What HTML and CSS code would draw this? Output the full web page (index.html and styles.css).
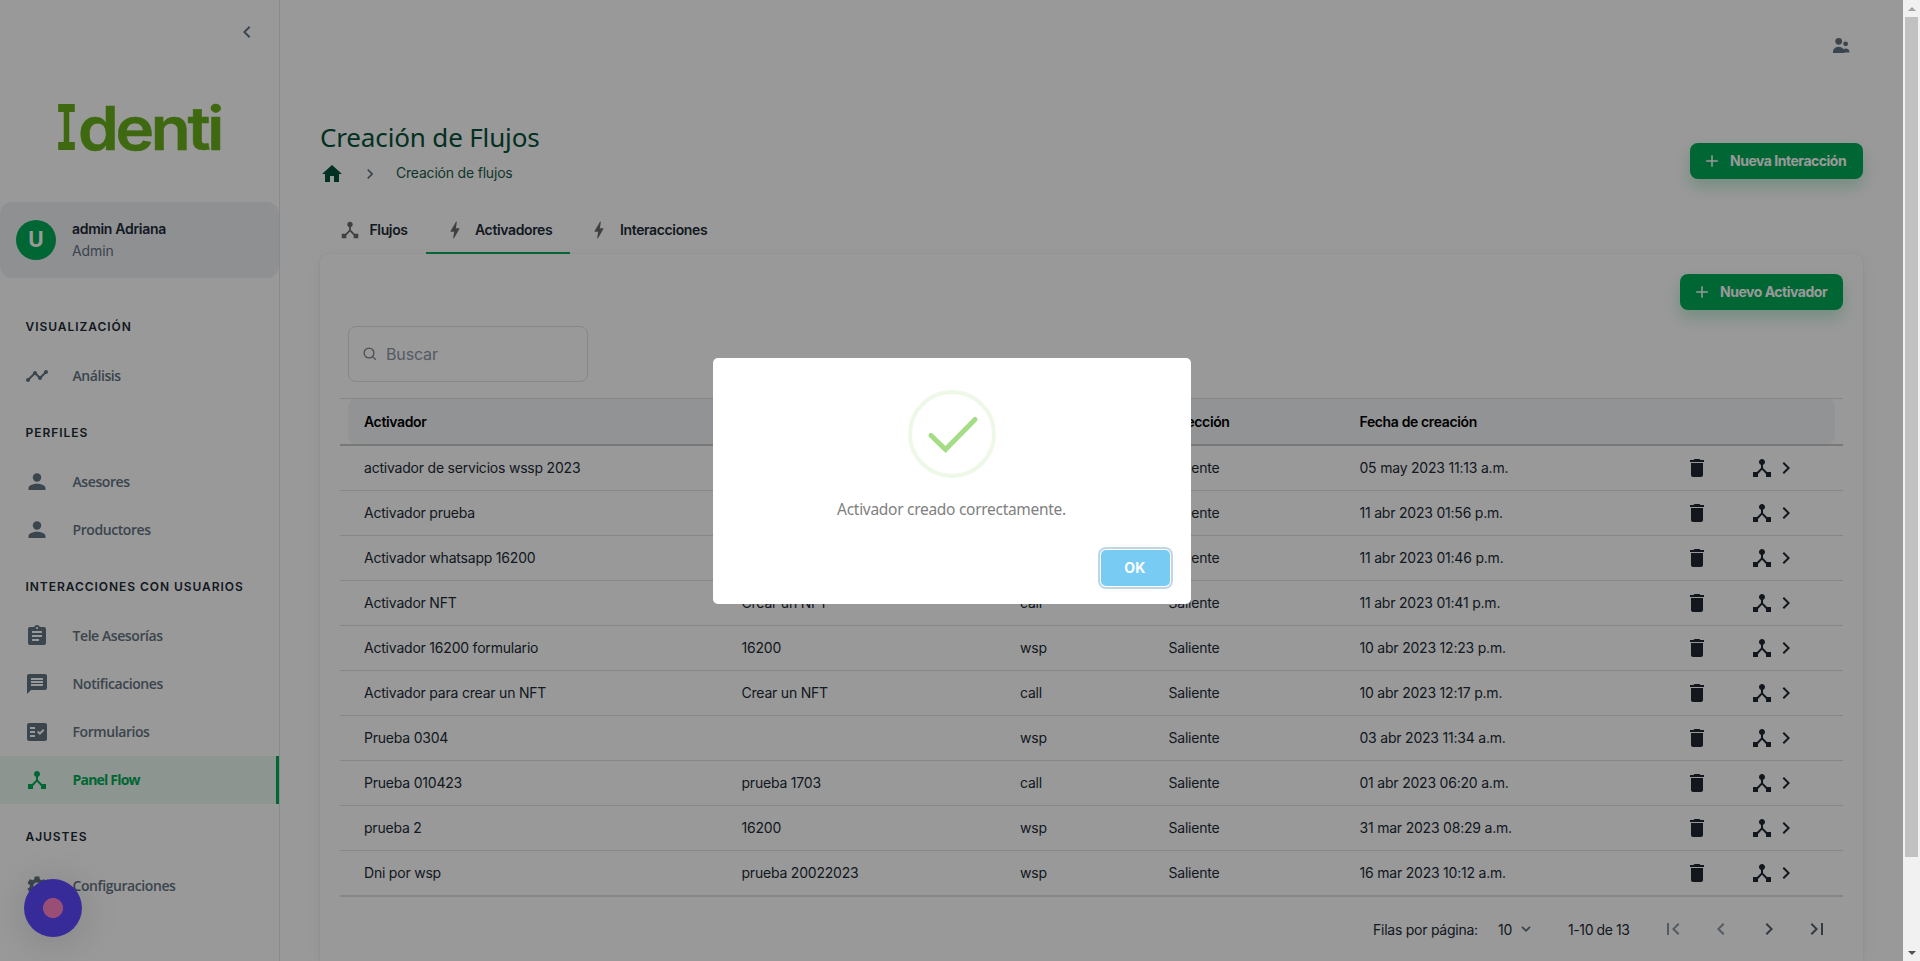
FILE: index.html
```html
<!DOCTYPE html>
<html lang="es">
<head>
<meta charset="utf-8">
<title>Creación de Flujos</title>
<link rel="stylesheet" href="styles.css">
</head>
<body>
<svg class="defs" width="0" height="0">
  <symbol id="hub" viewBox="0 0 24 24"><path d="M17 16l-4-4V8.820C14.160 8.400 15 7.300 15 6c0-1.660-1.340-3-3-3S9 4.340 9 6c0 1.300.84 2.400 2 2.820V12l-4 4H3v5h5v-3.050l4-4.200 4 4.200V21h5v-5h-4z"/></symbol>
  <symbol id="bolt" viewBox="0 0 24 24"><path d="M11 21h-1l1-7H7.500c-.88 0-.33-.75-.31-.78C8.480 10.940 10.420 7.540 13.010 3h1l-1 7h3.510c.4 0 .62.19.4.66C12.970 17.550 11 21 11 21z"/></symbol>
  <symbol id="person" viewBox="0 0 24 24"><circle cx="12" cy="7.500" r="4.200"/><path d="M3.500 20v-1.600c0-3 4.500-4.600 8.500-4.600s8.500 1.600 8.500 4.600V20z"/></symbol>
  <symbol id="right" viewBox="0 0 24 24"><path d="M8.600 16.600 13.200 12 8.600 7.400 10 6l6 6-6 6z"/></symbol>
  <symbol id="left" viewBox="0 0 24 24"><path d="M15.400 16.600 10.800 12l4.600-4.600L14 6l-6 6 6 6z"/></symbol>
  <symbol id="plus" viewBox="0 0 24 24"><path d="M19 12.900h-6.100V19h-1.800v-6.100H5v-1.800h6.100V5h1.800v6.100H19z"/></symbol>
  <symbol id="trash" viewBox="0 0 24 24"><path d="M6 19c0 1.100.9 2 2 2h8c1.100 0 2-.9 2-2V7H6zM19 4h-3.500l-1-1h-5l-1 1H5v2h14z"/></symbol>
</svg>
<div class="screen">
  <div class="app">
    <aside class="sidebar">
      <div class="collapse"><svg class="i24"><use href="#left"/></svg></div>
      <svg class="logo" width="164" height="56" viewBox="0 0 164 56">
        <text class="logo-i" x="-2" y="50" textLength="23" lengthAdjust="spacingAndGlyphs">I</text>
        <text class="logo-rest" x="21" y="50" textLength="143" lengthAdjust="spacingAndGlyphs">denti</text>
      </svg>
      <div class="user">
        <div class="avatar">U</div>
        <div><div class="user-name">admin Adriana</div><div class="user-role">Admin</div></div>
      </div>
      <nav>
        <h3 class="group">Visualización</h3>
        <a class="item"><svg class="i24" viewBox="0 0 24 24"><path d="M23 8c0 1.100-.9 2-2 2-.18 0-.35-.02-.51-.07l-3.560 3.550c.05.16.07.34.07.52 0 1.100-.9 2-2 2s-2-.9-2-2c0-.18.02-.36.07-.52l-2.550-2.550c-.16.05-.34.07-.52.07s-.36-.02-.52-.07l-4.550 4.560c.05.16.07.33.07.51 0 1.100-.9 2-2 2s-2-.9-2-2 .9-2 2-2c.18 0 .35.02.51.07l4.560-4.550C8.020 9.360 8 9.180 8 9c0-1.100.9-2 2-2s2 .9 2 2c0 .18-.02.36-.07.52l2.550 2.550c.16-.05.34-.07.52-.07s.36.02.52.07l3.550-3.560C19.020 8.350 19 8.180 19 8c0-1.100.9-2 2-2s2 .9 2 2z"/></svg><span>Análisis</span></a>
        <h3 class="group">Perfiles</h3>
        <a class="item"><svg class="i24"><use href="#person"/></svg><span>Asesores</span></a>
        <a class="item"><svg class="i24"><use href="#person"/></svg><span>Productores</span></a>
        <h3 class="group">Interacciones con usuarios</h3>
        <a class="item"><svg class="i24" viewBox="0 0 24 24"><path d="M19 3h-4.200C14.400 1.840 13.300 1 12 1s-2.400.84-2.820 2H5c-1.100 0-2 .9-2 2v14c0 1.100.9 2 2 2h14c1.100 0 2-.9 2-2V5c0-1.100-.9-2-2-2zm-7 0c.55 0 1 .45 1 1s-.45 1-1 1-1-.45-1-1 .45-1 1-1zm2 14H7v-2h7zm3-4H7v-2h10zm0-4H7V7h10z"/></svg><span>Tele Asesorías</span></a>
        <a class="item"><svg class="i24" viewBox="0 0 24 24"><path d="M20 2H4c-1.100 0-1.990.9-1.990 2L2 22l4-4h14c1.100 0 2-.9 2-2V4c0-1.100-.9-2-2-2zm-2 12H6v-2h12zm0-3H6V9h12zm0-3H6V6h12z"/></svg><span>Notificaciones</span></a>
        <a class="item"><svg class="i24" viewBox="0 0 24 24"><path fill-rule="evenodd" d="M20 3H4c-1.100 0-2 .9-2 2v14c0 1.100.9 2 2 2h16c1.100 0 2-.9 2-2V5c0-1.100-.9-2-2-2zM10 17H5v-2h5zm0-4H5v-2h5zm0-4H5V7h5zm4.820 6L12 12.160l1.410-1.410 1.410 1.420L17.990 9l1.420 1.420z"/></svg><span>Formularios</span></a>
        <a class="item active"><svg class="i24"><use href="#hub"/></svg><span>Panel Flow</span></a>
        <h3 class="group">Ajustes</h3>
        <a class="item"><svg class="i24" viewBox="0 0 24 24"><path fill-rule="evenodd" d="M19.140 12.940c.04-.3.06-.61.06-.94 0-.32-.02-.64-.07-.94l2.030-1.580c.18-.14.23-.41.12-.61l-1.920-3.320c-.12-.22-.37-.29-.59-.22l-2.390.96c-.5-.38-1.030-.7-1.620-.94L14.400 2.810c-.04-.24-.24-.41-.48-.41h-3.840c-.24 0-.43.17-.47.41L9.250 5.350C8.660 5.590 8.120 5.920 7.630 6.290L5.240 5.330c-.22-.08-.47 0-.59.22L2.740 8.870c-.12.21-.08.47.12.61l2.030 1.580c-.05.3-.09.63-.09.94s.02.64.07.94l-2.030 1.580c-.18.14-.23.41-.12.61l1.920 3.320c.12.22.37.29.59.22l2.390-.96c.5.38 1.030.7 1.620.94l.36 2.540c.05.24.24.41.48.41h3.840c.24 0 .44-.17.47-.41l.36-2.540c.59-.24 1.130-.56 1.620-.94l2.390.96c.22.08.47 0 .59-.22l1.920-3.320c.12-.22.07-.47-.12-.61zM12 15.600A3.600 3.600 0 1 1 12 8.400a3.600 3.600 0 0 1 0 7.200z"/></svg><span>Configuraciones</span></a>
      </nav>
      <div class="fab"></div>
    </aside>

    <main class="main">
      <header class="topbar"><svg width="20" height="20" viewBox="0 0 20 20"><circle cx="7.700" cy="5.300" r="3.400"/><circle cx="14.600" cy="7.800" r="2.400"/><path d="M2 16.900v-1c0-3 2.500-5.100 5.700-5.100 2.200 0 4 1 5 2.500.6-.5 1.300-.8 2.100-.8 2 0 3.500 1.300 3.500 3v1.100h-4.800v.3z"/></svg></header>
      <div class="page-head">
        <div>
          <h1 class="title">Creación de Flujos</h1>
          <div class="crumbs">
            <svg class="i24 home" viewBox="0 0 24 24"><path d="M10 20v-6h4v6h5v-8h3L12 3 2 12h3v8z"/></svg>
            <svg class="crumb-sep"><use href="#right"/></svg>
            <span>Creación de flujos</span>
          </div>
        </div>
        <button class="btn btn-interaction"><svg><use href="#plus"/></svg><span>Nueva Interacción</span></button>
      </div>
      <div class="tabs">
        <div class="tab tab-flows"><svg><use href="#hub"/></svg><span>Flujos</span></div>
        <div class="tab tab-active"><svg><use href="#bolt"/></svg><span>Activadores</span></div>
        <div class="tab tab-inter"><svg><use href="#bolt"/></svg><span>Interacciones</span></div>
      </div>
      <section class="card">
        <div class="actions"><button class="btn btn-trigger"><svg><use href="#plus"/></svg><span>Nuevo Activador</span></button></div>
        <div class="search"><svg width="14" height="14" viewBox="0 0 14 14"><circle cx="6" cy="6" r="4.900"/><path d="M9.600 9.600l3.200 3.200"/></svg><span>Buscar</span></div>
        <div class="table">
          <div class="thead"><div class="row"><span>Activador</span><span>Interacción</span><span>Canal</span><span>Dirección</span><span>Fecha de creación</span></div></div>
          <div id="rows"></div>
        </div>
        <div class="pager">
          <span class="rows-label">Filas por página:</span>
          <span class="rows-count">10</span>
          <svg class="caret" width="12" height="8" viewBox="0 0 12 8"><path d="M2 1.800l4 4 4-4"/></svg>
          <span class="range">1-10 de 13</span>
          <svg class="pg off" viewBox="0 0 24 24"><path d="M18.400 16.600 13.800 12l4.600-4.600L17 6l-6 6 6 6zM6 6h2v12H6z"/></svg>
          <svg class="pg off"><use href="#left"/></svg>
          <svg class="pg"><use href="#right"/></svg>
          <svg class="pg" viewBox="0 0 24 24"><path d="M5.600 7.400 10.200 12l-4.600 4.600L7 18l6-6-6-6zM16 6h2v12h-2z"/></svg>
        </div>
      </section>
    </main>
  </div>

  <div class="scrollbar">
    <i class="arrow up"></i><i class="thumb"></i><i class="arrow down"></i>
  </div>

  <div class="overlay">
    <div class="modal">
      <svg class="success" width="88" height="88" viewBox="0 0 88 88"><circle cx="44" cy="44" r="42"/><path d="M23 45.500 37.500 59.500 67 29.500"/></svg>
      <p class="message">Activador creado correctamente.</p>
      <div class="modal-foot"><button class="ok">OK</button></div>
    </div>
  </div>
</div>
<script src="rows.js"></script>
</body>
</html>
```

FILE: rows.js
```js
const rows = [
  ["activador de servicios wssp 2023", "", "wsp", "Saliente", "05 may 2023 11:13 a.m."],
  ["Activador prueba", "", "wsp", "Saliente", "11 abr 2023 01:56 p.m."],
  ["Activador whatsapp 16200", "", "wsp", "Saliente", "11 abr 2023 01:46 p.m."],
  ["Activador NFT", "Crear un NFT", "call", "Saliente", "11 abr 2023 01:41 p.m."],
  ["Activador 16200 formulario", "16200", "wsp", "Saliente", "10 abr 2023 12:23 p.m."],
  ["Activador para crear un NFT", "Crear un NFT", "call", "Saliente", "10 abr 2023 12:17 p.m."],
  ["Prueba 0304", "", "wsp", "Saliente", "03 abr 2023 11:34 a.m."],
  ["Prueba 010423", "prueba 1703", "call", "Saliente", "01 abr 2023 06:20 a.m."],
  ["prueba 2", "16200", "wsp", "Saliente", "31 mar 2023 08:29 a.m."],
  ["Dni por wsp", "prueba 20022023", "wsp", "Saliente", "16 mar 2023 10:12 a.m."]
];
document.getElementById("rows").innerHTML = rows.map(r =>
  '<div class="row body-row">' + r.map(c => "<span>" + c + "</span>").join("") +
  '<svg class="ic"><use href="#trash"/></svg><svg class="ic"><use href="#hub"/></svg><svg class="ic"><use href="#right"/></svg></div>'
).join("");
```

FILE: styles.css
```css
* { box-sizing: border-box; }
body { margin: 0; font-family: Inter, "Liberation Sans", sans-serif; font-size: 14px; color: #212b36; overflow: hidden; }
h1, h3, p { margin: 0; }
button { border: 0; font-family: inherit; }
svg { display: block; flex: none; fill: currentColor; }
.defs { position: absolute; }
.i24 { width: 24px; height: 24px; }

.screen { position: relative; display: flex; width: 1920px; height: 961px; overflow: hidden; }
.app { display: flex; width: 1903px; background: #fff; }

/* Sidebar */
.sidebar { position: relative; width: 280px; flex: none; border-right: 1px solid #e2e5e8; }
.collapse { display: flex; justify-content: flex-end; padding: 20px 20px 0 0; color: #637381; }
.logo { margin: 56px 0 0 57px; overflow: visible; fill: #69b01c; }
.logo-i { font: 700 62px "DejaVu Sans Mono", monospace; }
.logo-rest { font: 600 60px Inter, sans-serif; letter-spacing: -3px; stroke: #69b01c; stroke-width: .6; }
.user { display: flex; align-items: center; gap: 16px; height: 76px; margin-top: 46px; padding-left: 16px; border-radius: 12px; background: #eff1f4; }
.avatar { width: 40px; height: 40px; border-radius: 50%; background: #00ab55; color: #fff; font: 700 21px/40px Inter, sans-serif; text-align: center; }
.user-name { font-weight: 600; line-height: 22px; letter-spacing: -0.3px; }
.user-role { line-height: 22px; color: #637381; letter-spacing: -0.1px; }
nav { padding-top: 16px; }
.group { height: 58px; padding: 24px 0 0 25.500px; font-size: 12px; line-height: 18px; font-weight: 600; letter-spacing: .95px; text-transform: uppercase; }
.item { display: flex; align-items: center; gap: 24px; height: 48px; padding-left: 24.500px; color: #637381; font: 600 14px "Open Sans", sans-serif; letter-spacing: -0.42px; }
.item span { padding-bottom: 1px; }
.active { color: #00ab55; background: #ebf8f2; border-right: 3px solid #00ab55; font-weight: 700; letter-spacing: -0.8px; }
.fab { position: absolute; left: 24px; top: 879px; width: 58px; height: 58px; border-radius: 50%; background: radial-gradient(circle, #ff82c4 0 9.700px, #5b48ff 10.300px); box-shadow: 0 4px 40px rgba(0, 0, 0, .16); }

/* Main column */
.main { display: flex; flex-direction: column; flex: 1; padding: 0 40px; }
.topbar { display: flex; justify-content: flex-end; height: 119px; padding: 36px 12px 0 0; color: #637381; }
.page-head { display: flex; justify-content: space-between; height: 87px; }
.title { font: 400 26px/36px "Noto Sans", sans-serif; color: #055138; letter-spacing: -0.15px; }
.crumbs { display: flex; align-items: center; height: 36px; padding-top: 1px; color: #1c5b48; }
.home { color: #00533a; }
.crumb-sep { width: 20px; height: 20px; margin: 0 16px 0 16px; color: #637381; }
.crumbs span { padding-bottom: 2px; letter-spacing: -0.2px; }
.btn { display: flex; align-items: center; height: 36px; padding: 0 0 0 12px; border-radius: 8px; background: #00ab55; color: #fff; font-size: 14px; font-weight: 700; letter-spacing: -0.48px; box-shadow: 0 8px 16px rgba(0, 171, 85, .24); }
.btn svg { width: 20px; height: 20px; margin-right: 8px; }
.btn span { padding-bottom: 1px; }
.btn-interaction { width: 173px; margin-top: 24px; }
.btn-trigger { width: 163px; }
.tabs { display: flex; height: 48px; }
.tab { display: flex; align-items: center; font-weight: 600; letter-spacing: -0.37px; }
.tab span { padding-bottom: 1px; }
.tab svg { width: 22px; height: 22px; color: #6c6c6c; }
.tab-flows { width: 106px; padding-left: 18.500px; gap: 9px; }
.tab-active { width: 144px; padding: 2px 0 0 18px; gap: 9px; border-bottom: 2px solid #00ab55; }
.tab-inter { padding-left: 18px; gap: 10px; }

.card { flex: 1; padding: 20px 20px 0; border-radius: 8px 8px 0 0; background: #fff; box-shadow: 0 0 2px rgba(145, 158, 171, .24), 0 4px 14px -3px rgba(145, 158, 171, .22); }
.actions { display: flex; justify-content: flex-end; }
.search { display: flex; align-items: center; gap: 9px; width: 240px; height: 56px; margin: 16px 0 0 8px; padding: 0 0 0 14px; border: 1px solid #dce0e4; border-radius: 8px; font-size: 16px; color: #8d98a5; letter-spacing: -0.15px; }
.search svg { fill: none; stroke: #7d858e; stroke-width: 1.300; }
.table { margin-top: 16px; border-top: 1px solid #dcdfe2; border-bottom: 1px solid #dcdfe2; }
.thead { height: 47px; padding: 0 8px; border-bottom: 2px solid #c9c9c9; font-weight: 600; color: #000; letter-spacing: -0.37px; }
.thead .row { padding-left: 16px; border-radius: 8px; background: #f4f6f8; }
.row { display: grid; grid-template-columns: 377.500px 278.500px 148.500px 191px 325.500px 65px 24px 24px; align-items: center; height: 45px; padding-left: 24px; }
.body-row { border-bottom: 1px solid #dcdfe2; letter-spacing: -0.21px; }
.body-row span { padding-bottom: 1px; }
.ic { width: 24px; height: 24px; color: #1e2731; }
.pager { display: flex; align-items: center; height: 64px; padding-right: 14px; justify-content: flex-end; letter-spacing: -0.25px; }
.rows-label { width: 125px; }
.rows-count { width: 22px; }
.caret { fill: none; stroke: #637381; stroke-width: 1.800; }
.range { width: 93px; margin-left: 36px; letter-spacing: -0.4px; }
.pg { width: 24px; height: 24px; margin-left: 24px; color: #56626e; }
.range + .pg { margin-left: 0; }
.off { color: #8c97a3; }

/* Window scrollbar */
.scrollbar { display: flex; flex-direction: column; align-items: center; width: 17px; background: #f1f1f1; }
.arrow { height: 17px; width: 17px; display: flex; align-items: center; justify-content: center; }
.arrow::before { content: ""; border: 4px solid transparent; }
.up::before { border-bottom-color: #a3a3a3; border-top: 0; }
.down::before { border-top-color: #505050; border-bottom: 0; }
.thumb { width: 13px; height: 840px; margin-bottom: auto; background: #c1c1c1; }

/* Dialog */
.overlay { position: absolute; inset: 0 17px 0 0; display: flex; align-items: center; justify-content: center; background: rgba(0, 0, 0, .4); }
.modal { width: 478px; height: 246px; border-radius: 5px; background: #fff; }
.success { margin: 32px auto 0; fill: none; }
.success circle { stroke: #edf8e7; stroke-width: 4; }
.success path { stroke: #a5dc86; stroke-width: 5; stroke-linecap: round; }
.message { margin-top: 19px; font: 400 15.500px/24px "Noto Sans", sans-serif; color: #808080; text-align: center; letter-spacing: -0.29px; }
.modal-foot { display: flex; justify-content: flex-end; padding: 29px 21px 0; }
.ok { width: 69px; height: 36px; border-radius: 5px; background: #78cbf2; color: #fff; font-size: 14px; font-weight: 700; letter-spacing: .3px; box-shadow: 0 0 0 1px #fff, 0 0 0 3px rgba(43, 114, 165, .29); }
```
